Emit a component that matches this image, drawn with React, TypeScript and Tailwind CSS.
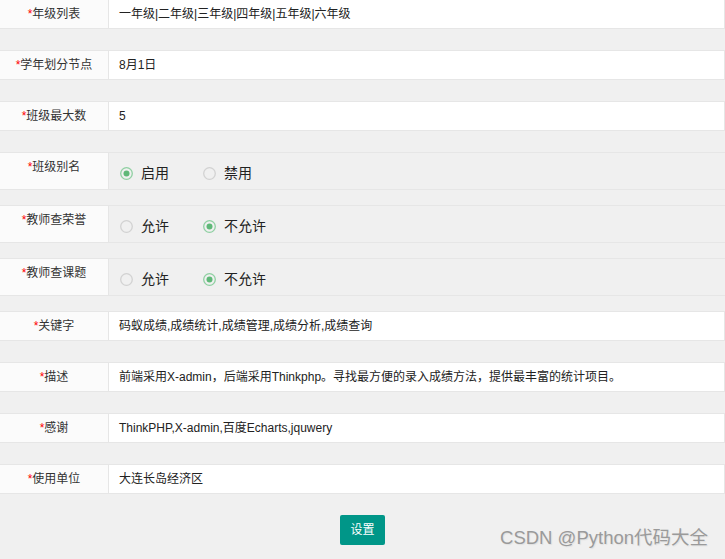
import React from "react";

const FONT = '"Liberation Sans", "Noto Sans CJK SC", sans-serif';

function Label({ text }: { text: string }) {
  return (
    <div className="w-[109px] shrink-0 bg-[#fbfbfb] border-r border-[#e6e6e6] h-[28px] leading-[28px] text-center text-[12px] text-[#333]">
      <span className="text-[#ff0000]">*</span>
      {text}
    </div>
  );
}

function TextRow({ label, value }: { label: string; value: string }) {
  return (
    <div className="flex h-[30px] border-y border-[#e6e6e6] mb-[21px]">
      <Label text={label} />
      <div className="flex-1 bg-white border-r border-[#e6e6e6] pl-[10px] leading-[28px] text-[12px] text-[#222] whitespace-nowrap overflow-hidden">
        {value}
      </div>
    </div>
  );
}

function Radio({ checked, text }: { checked: boolean; text: string }) {
  return (
    <div className="w-[83px] flex items-center">
      <svg width="13" height="13" viewBox="0 0 13 13" className="shrink-0">
        <circle
          cx="6.5"
          cy="6.5"
          r="5.8"
          fill="none"
          stroke={checked ? "#8fd0a2" : "#d2d2d2"}
          strokeWidth="1.3"
        />
        {checked && <circle cx="6.5" cy="6.5" r="3" fill="#5fb878" />}
      </svg>
      <span className="ml-[8px] text-[14px] text-[#222]">{text}</span>
    </div>
  );
}

function RadioRow({
  label,
  options,
}: {
  label: string;
  options: { text: string; checked: boolean }[];
}) {
  return (
    <div className="flex h-[38px] border-y border-[#e6e6e6] mb-[15px]">
      <div className="w-[109px] shrink-0 bg-[#fbfbfb] border-r border-[#e6e6e6] h-[36px]">
        <div className="h-[28px] leading-[28px] text-center text-[12px] text-[#333]">
          <span className="text-[#ff0000]">*</span>
          {label}
        </div>
      </div>
      <div className="flex-1 flex items-center pl-[11px] pt-[5px]">
        {options.map((o) => (
          <Radio key={o.text} checked={o.checked} text={o.text} />
        ))}
      </div>
    </div>
  );
}

export default function App() {
  return (
    <div
      className="relative w-[725px] h-[559px] overflow-hidden bg-[#f0f0f0]"
      style={{ fontFamily: FONT }}
    >
      <div className="-mt-px flex flex-col">
        <TextRow label="年级列表" value="一年级|二年级|三年级|四年级|五年级|六年级" />
        <TextRow label="学年划分节点" value="8月1日" />
        <TextRow label="班级最大数" value="5" />
        <RadioRow
          label="班级别名"
          options={[
            { text: "启用", checked: true },
            { text: "禁用", checked: false },
          ]}
        />
        <RadioRow
          label="教师查荣誉"
          options={[
            { text: "允许", checked: false },
            { text: "不允许", checked: true },
          ]}
        />
        <RadioRow
          label="教师查课题"
          options={[
            { text: "允许", checked: false },
            { text: "不允许", checked: true },
          ]}
        />
        <TextRow label="关键字" value="码蚁成绩,成绩统计,成绩管理,成绩分析,成绩查询" />
        <TextRow
          label="描述"
          value="前端采用X-admin，后端采用Thinkphp。寻找最方便的录入成绩方法，提供最丰富的统计项目。"
        />
        <TextRow label="感谢" value="ThinkPHP,X-admin,百度Echarts,jquwery" />
        <TextRow label="使用单位" value="大连长岛经济区" />
        <div className="flex justify-center">
          <button className="w-[45px] h-[30px] rounded-[2px] bg-[#009688] text-white text-[12px] leading-[30px]">
            设置
          </button>
        </div>
      </div>
      <div className="absolute right-[17px] bottom-[7px] text-[18.5px] text-[#9a9a9a] whitespace-nowrap [text-shadow:1px_1px_1px_#e0e0e0]">
        CSDN @Python代码大全
      </div>
    </div>
  );
}
